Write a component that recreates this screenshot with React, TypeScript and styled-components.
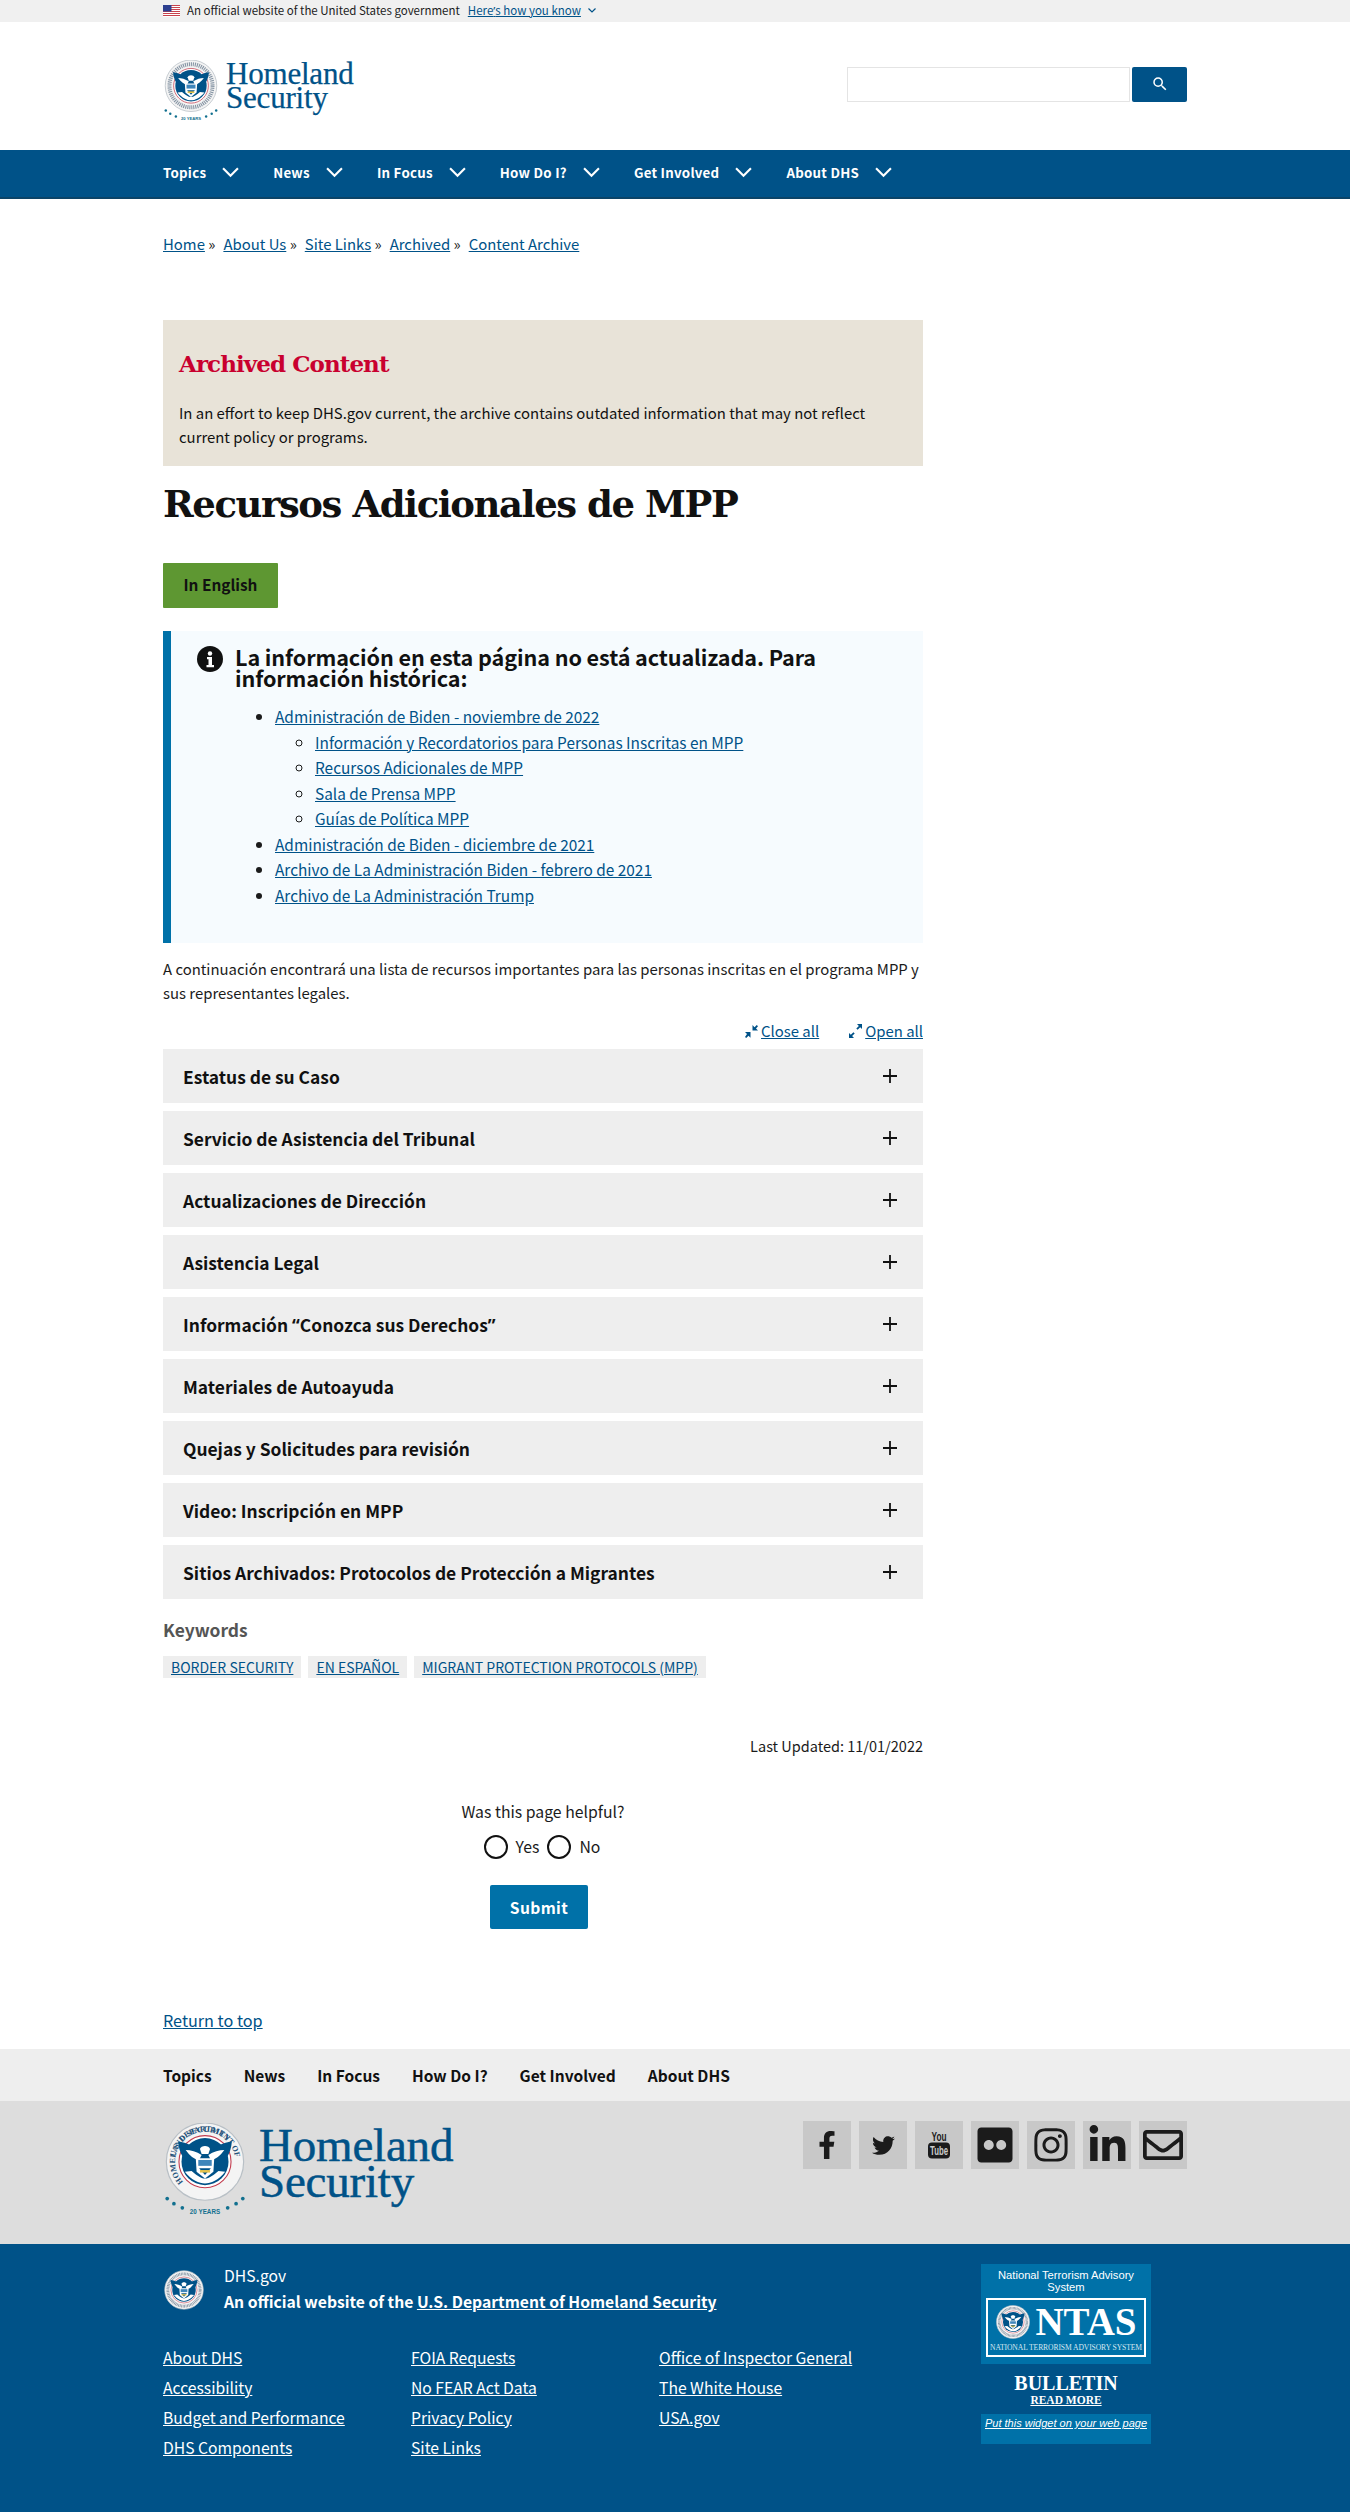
import React from "react";
import styled, { createGlobalStyle } from "styled-components";
import { FaFacebookF, FaTwitter, FaFlickr, FaInstagram, FaLinkedinIn, FaRegEnvelope } from "react-icons/fa";
import { MdSearch } from "react-icons/md";

const sans = `"Noto Sans CJK SC", "Noto Sans", sans-serif`;
const serif = `"DejaVu Serif", "Liberation Serif", serif`;

const Global = createGlobalStyle`
  html, body { margin: 0; padding: 0; background: #fff; }
  body { font-family: ${sans}; color: #1b1b1b; font-size: 14.5px; }
  a { color: #005288; }
`;

const Page = styled.div`width: 1350px; height: 2512px; overflow: hidden; display: flex; flex-direction: column;`;
const Wrap = styled.div`width: 1024px; margin-left: 163px;`;
const Punct = styled.span`font-family: "Noto Sans", sans-serif;`;

const Banner = styled.div`height: 22px; background: #f0f0f0; font-size: 11.5px; line-height: 21px;`;
const BannerIn = styled(Wrap)`display: flex; align-items: center; gap: 7px;`;
const BannerLink = styled.a`margin-left: 1px; text-decoration: underline;`;
const BannerChevron = styled.span`color: #005288; display: flex;`;

const Header = styled.header`height: 128px; display: flex; align-items: center;`;
const HeaderIn = styled(Wrap)`display: flex; justify-content: space-between; align-items: center;`;
const Logo = styled.div<{ $big?: boolean }>`display: flex; align-items: center; gap: ${(p) => (p.$big ? "12px" : "7px")}; margin-top: ${(p) => (p.$big ? "2px" : "10px")};`;
const LogoText = styled.div<{ $big?: boolean }>`
  font-family: "Liberation Serif", serif; color: #005288;
  font-size: ${(p) => (p.$big ? "47px" : "31px")};
  line-height: ${(p) => (p.$big ? "36px" : "24px")};
  letter-spacing: -.2px;
  -webkit-text-stroke: ${(p) => (p.$big ? ".5px" : ".25px")} #005288;
  margin-top: ${(p) => (p.$big ? "-14px" : "-10px")};
`;
const Search = styled.div`display: flex; gap: 2px; margin-bottom: 4px;`;
const SearchInput = styled.div`width: 281px; height: 33px; border: 1px solid #e4e4e4; background: #fff;`;
const SearchBtn = styled.div`width: 55px; height: 35px; background: #005288; border-radius: 2px; color: #fff; display: flex; align-items: center; justify-content: center;`;

const Nav = styled.nav`height: 47px; background: #005288; border-bottom: 2px solid #0b4468; display: flex; align-items: center;`;
const NavIn = styled(Wrap)`display: flex; gap: 34px; margin-top: -3px;`;
const NavItem = styled.div`display: flex; align-items: center; gap: 16px; color: #fff; font-weight: 700; font-size: 13.3px; letter-spacing: .25px;`;

const Breadcrumb = styled(Wrap)`margin-top: 33px; font-size: 14.9px; line-height: 24px; display: flex;`;
const Crumb = styled.span`margin-right: 8px; white-space: pre;`;

const Main = styled.main`width: 760px; margin-left: 163px;`;
const Archived = styled.section`margin-top: 64px; height: 146px; box-sizing: border-box; background: #e8e3d8; padding: 27px 16px 0;`;
const ArchivedTitle = styled.h2`margin: 0 0 20px; font: 700 23px/34px ${serif}; color: #c9002f; letter-spacing: -.93px;`;
const ArchivedText = styled.p`margin: 0; font-size: 14.9px; line-height: 24px; color: #111;`;
const Title = styled.h1`margin: 14px 0 0; font: 700 37px/48px ${serif}; color: #111; letter-spacing: -1.45px;`;
const English = styled.div`margin-top: 35px; width: 115px; height: 45px; border-radius: 1px; background: #5e9732; display: flex; align-items: center; justify-content: center; font-weight: 700; font-size: 15.4px; color: #111; padding-bottom: 3px; box-sizing: border-box;`;
const Alert = styled.section`margin-top: 23px; height: 312px; box-sizing: border-box; background: #f6fbfe; border-left: 8px solid #0071a8; padding: 15px 20px 0 26px; display: flex; gap: 12px;`;
const AlertIcon = styled.svg`flex: none;`;
const AlertBody = styled.div`flex: 1;`;
const AlertTitle = styled.h3`margin: 0 0 16px; font-size: 21.6px; line-height: 21px; font-weight: 700; color: #111; letter-spacing: -.1px;`;
const List = styled.ul`margin: 0; padding-left: 40px; font-size: 15.4px; line-height: 25.5px;`;
const Sub = styled.ul`margin: 0; padding-left: 40px; list-style: circle;`;
const Intro = styled.p`margin: 14px 0 0; font-size: 14.9px; line-height: 24px;`;
const Toggles = styled.div`margin-top: 14px; height: 30px; display: flex; justify-content: flex-end; gap: 30px; font-size: 14.9px; line-height: 24px;`;
const Toggle = styled.span`display: flex; align-items: center; gap: 3px; height: 24px;`;
const Accordion = styled.div`display: flex; flex-direction: column; gap: 8px;`;
const AccItem = styled.div`height: 54px; background: #eee; display: flex; align-items: center; justify-content: space-between; padding: 0 26px 0 20px; font-weight: 700; font-size: 17.4px; color: #111;`;
const Keywords = styled.h4`margin: 18px 0 0; font-size: 17.4px; line-height: 26px; font-weight: 700; color: #555;`;
const Tags = styled.div`display: flex; gap: 7px; margin-top: 13px;`;
const Tag = styled.a`background: #eee; font-size: 14px; line-height: 22px; padding: 0 8px; text-transform: uppercase;`;
const Updated = styled.p`margin: 56px 0 0; text-align: right; font-size: 14.5px; line-height: 24px;`;
const Helpful = styled.div`margin-top: 42px; display: flex; flex-direction: column; align-items: center;`;
const HelpQ = styled.div`font-size: 15.8px; line-height: 24px;`;
const Radios = styled.div`display: flex; align-items: center; margin-top: 11px; margin-right: 2px; font-size: 15.8px; line-height: 24px; gap: 8px;`;
const Radio = styled.span`width: 20px; height: 20px; border: 2px solid #111; border-radius: 50%; background: #fff;`;
const RadioLabel = styled.span`display: block;`;
const Submit = styled.div`margin-top: 26px; width: 98px; height: 44px; margin-right: 8px; background: #0071a8; border-radius: 2px; color: #fff; font-weight: 700; font-size: 15.6px; display: flex; align-items: center; justify-content: center; letter-spacing: .4px;`;
const Top = styled.a`display: block; margin-top: 79px; font-size: 16.2px; line-height: 24px;`;

const FootNav = styled.div`margin-top: 17px; height: 52px; background: #eee; display: flex; align-items: center;`;
const FootNavIn = styled(Wrap)`display: flex; gap: 32px; font-weight: 700; font-size: 15.5px; color: #111;`;
const FootMid = styled.div`height: 143px; background: #ddd;`;
const FootMidIn = styled(Wrap)`display: flex; justify-content: space-between; padding-top: 20px;`;
const Social = styled.div`display: flex; gap: 8px;`;
const SocialItem = styled.div`width: 48px; height: 48px; background: #c8c8c8; color: #1b1b1b; display: flex; align-items: center; justify-content: center;`;
const FootBlue = styled.footer`flex: 1; background: #005288; color: #fff;`;
const FootBlueIn = styled(Wrap)`display: flex; justify-content: space-between; padding-top: 20px;`;
const FootLeft = styled.div`width: 800px;`;
const Identity = styled.div`display: flex; gap: 19px; align-items: center; font-size: 15.7px; line-height: 26px;`;
const IdentityText = styled.div`margin-top: -1px;`;
const Strong = styled.div`font-weight: 700; a { color: #fff; }`;
const Links = styled.div`display: grid; grid-template-columns: repeat(3, 248px); margin-top: 28px; font-size: 15.7px; line-height: 30px;`;
const LinkCol = styled.div`display: flex; flex-direction: column; a { color: #fff; }`;
const Ntas = styled.div`width: 170px; margin-right: 36px; font-family: "Liberation Sans", sans-serif; text-align: center; display: flex; flex-direction: column;`;
const NtasTop = styled.div`background: #0071a8; height: 100px; box-sizing: border-box; padding: 5px 5px 0; font-size: 11.2px; line-height: 12px;`;
const NtasBox = styled.div`border: 2px solid #fff; height: 55px; margin-top: 5px; padding: 0 2px; display: flex; flex-direction: column;`;
const NtasRow = styled.div`display: flex; align-items: center; justify-content: center; gap: 4px; height: 43px;`;
const NtasWord = styled.div`font: 700 39px/40px "Liberation Serif", serif;`;
const NtasSub = styled.div`font: 7.6px/10px "Liberation Serif", serif; white-space: nowrap; letter-spacing: -.1px; color: #d5e6f0;`;
const Bulletin = styled.div`margin-top: 9px; font: 700 20px/20px "Liberation Serif", serif;`;
const ReadMore = styled.a`color: #fff; font: 700 11.5px/14px "Liberation Serif", serif;`;
const Widget = styled.div`margin: 7px 0 0; background: #0071a8; height: 30px; font-size: 11px; font-style: italic; line-height: 18px; a {color: #fff;}`;

function Seal({ size, years, ring }: { size: number; years?: boolean; ring?: boolean }) {
  const h = years ? 112 : 100;
  const id = `ring${size}`;
  const cy = years ? 46 : 50;
  return (
    <svg width={size} height={(size * h) / 100} viewBox={`0 0 100 ${h}`} aria-hidden>
      <circle cx="50" cy={cy} r="46" fill="#f4f4f4" stroke="#b9c0c6" strokeWidth="1.4" />
      <circle cx="50" cy={cy} r="31" fill="#fff" stroke="#c23a4d" strokeWidth="1.3" />
      {ring ? (
        <>
          <defs><path id={id} d={`M50 ${cy + 35.5} a35.5 35.5 0 1 1 .01 0`} /></defs>
          <text fontFamily="Liberation Serif, serif" fontWeight="700" fontSize="9.6" fill="#24527a" letterSpacing=".15">
            <textPath href={`#${id}`} startOffset="13%">HOMELAND SECURITY</textPath>
          </text>
          <defs><path id={`${id}t`} d={`M14 ${cy} a36 36 0 0 1 72 0`} /></defs>
          <text fontFamily="Liberation Serif, serif" fontWeight="700" fontSize="9.6" fill="#24527a">
            <textPath href={`#${id}t`} startOffset="5%">U.S. DEPARTMENT OF</textPath>
          </text>
        </>
      ) : (
        <circle cx="50" cy={cy} r="38.5" fill="none" stroke="#8796a5" strokeWidth="7" strokeDasharray="2 1.6" />
      )}
      <circle cx="50" cy={cy} r="28" fill="#005288" />
      <g transform={`translate(0 ${cy - 50})`}>
        <path d="M18 26 C28 27 38 32 46 40 L54 40 C62 32 72 27 82 26 C81 40 74 52 62 56 L38 56 C26 52 19 40 18 26Z" fill="#005288" />
        <path d="M27 36 C32 43 37 47 43 48 L46 42 C40 38 33 36 27 36Z M73 36 C68 43 63 47 57 48 L54 42 C60 38 67 36 73 36Z" fill="#fff" />
        <path d="M44 35 C45 30 55 30 56 35 L54 41 L46 41Z" fill="#fff" />
        <path d="M39 46 L61 46 L60 62 L50 70 L40 62Z" fill="#fff" />
        <rect x="42" y="48" width="16" height="7" fill="#3f86bb" />
        <path d="M43 58 L57 58 L50 66Z" fill="#005288" />
        <path d="M26 62 C34 72 43 76 50 76 C57 76 66 72 74 62 L66 61 C60 66 55 70 50 70 C45 70 40 66 34 61Z" fill="#fff" />
        <rect x="44" y="60" width="12" height="3" fill="#e5c34b" />
      </g>
      {years && (
        <g fill="#12708f">
          {[[5, 90], [13, 96], [23, 101], [77, 101], [87, 96], [95, 90]].map(([x, y]) => <circle key={x} cx={x} cy={y} r="2.2" />)}
          <text x="50" y="108" textAnchor="middle" fontFamily="Liberation Sans, sans-serif" fontWeight="700" fontSize="7.5">20 YEARS</text>
        </g>
      )}
    </svg>
  );
}

function Flag() {
  return (
    <svg width="17" height="12" viewBox="0 0 17 12" aria-hidden>
      <rect width="17" height="12" fill="#fff" />
      {[0, 2, 4, 6, 8, 10].map((y) => <rect key={y} y={y} width="17" height="1" fill="#c8424c" />)}
      <rect width="8.5" height="6.5" fill="#2c3f8f" />
    </svg>
  );
}

const Chevron = ({ w, h, sw }: { w: number; h: number; sw: number }) => (
  <svg width={w} height={h} viewBox="0 0 16 10" fill="none" stroke="currentColor" strokeWidth={sw} aria-hidden><path d="M1 1 L8 8 L15 1" /></svg>
);

const Plus = () => (
  <svg width="14" height="14" viewBox="0 0 14 14" stroke="#111" strokeWidth="1.8" aria-hidden><path d="M7 0V14M0 7H14" /></svg>
);

const Collapse = ({ open }: { open?: boolean }) => (
  <svg width="13" height="14" viewBox="0 0 13 14" fill="#005288" aria-hidden>
    {open
      ? <path d="M8 0h5v5l-1.8-1.8-2.6 2.6-1.3-1.3 2.6-2.6zM0 14V9l1.8 1.8 2.6-2.6 1.3 1.3-2.6 2.6L5 14z" />
      : <path d="M7.5 1v5.5H13l-2-2 2-2.2-1.2-1.2-2.3 2.2zM0 13l1.2 1 2.3-2.3 2 2V8H0l2 2z" />}
  </svg>
);

const YouTube = () => (
  <svg width="24" height="32" viewBox="0 0 24 32" aria-hidden>
    <text x="12" y="12" textAnchor="middle" fontFamily="Liberation Sans, sans-serif" fontWeight="700" fontSize="12" fill="#1b1b1b" textLength="15" lengthAdjust="spacingAndGlyphs">You</text>
    <rect x="1" y="13.5" width="22" height="16" rx="4" fill="#1b1b1b" />
    <text x="12" y="26" textAnchor="middle" fontFamily="Liberation Sans, sans-serif" fontWeight="700" fontSize="12" fill="#ccc" textLength="18" lengthAdjust="spacingAndGlyphs">Tube</text>
  </svg>
);

const crumbs = [["Home", "»"], ["About Us", "»"], ["Site Links", "»"], ["Archived", "»"], ["Content Archive", ""]];
const nav = ["Topics", "News", "In Focus", "How Do I?", "Get Involved", "About DHS"];
const acc: React.ReactNode[] = ["Estatus de su Caso", "Servicio de Asistencia del Tribunal", "Actualizaciones de Dirección", "Asistencia Legal", <>Información <Punct>“</Punct>Conozca sus Derechos<Punct>”</Punct></>, "Materiales de Autoayuda", "Quejas y Solicitudes para revisión", "Video: Inscripción en MPP", "Sitios Archivados: Protocolos de Protección a Migrantes"];
const cols = [["About DHS", "Accessibility", "Budget and Performance", "DHS Components"], ["FOIA Requests", "No FEAR Act Data", "Privacy Policy", "Site Links"], ["Office of Inspector General", "The White House", "USA.gov"]];

export default function App() {
  return (
    <Page>
      <Global />
      <Banner>
        <BannerIn>
          <Flag />
          <span>An official website of the United States government</span>
          <BannerLink href="#">Here<Punct>’</Punct>s how you know</BannerLink>
          <BannerChevron><Chevron w={8} h={5} sw={2.4} /></BannerChevron>
        </BannerIn>
      </Banner>
      <Header>
        <HeaderIn>
          <Logo><Seal size={56} years /><LogoText>Homeland<br />Security</LogoText></Logo>
          <Search><SearchInput /><SearchBtn><MdSearch size={18} /></SearchBtn></Search>
        </HeaderIn>
      </Header>
      <Nav>
        <NavIn>{nav.map((n) => <NavItem key={n}>{n}<Chevron w={17} h={11} sw={2} /></NavItem>)}</NavIn>
      </Nav>
      <Breadcrumb>{crumbs.map(([c, s]) => <Crumb key={c}><a href="#">{c}</a>{s && ` ${s}`}</Crumb>)}</Breadcrumb>
      <Main>
        <Archived>
          <ArchivedTitle>Archived Content</ArchivedTitle>
          <ArchivedText>In an effort to keep DHS.gov current, the archive contains outdated information that may not reflect current policy or programs.</ArchivedText>
        </Archived>
        <Title>Recursos Adicionales de MPP</Title>
        <English>In English</English>
        <Alert>
          <AlertIcon width="26" height="26" viewBox="0 0 26 26" aria-hidden>
            <circle cx="13" cy="13" r="13" fill="#111" />
            <circle cx="13" cy="7.5" r="2.2" fill="#fff" />
            <path d="M10 11h5v8h2v2.2H9.500V19h2v-5.800H10z" fill="#fff" />
          </AlertIcon>
          <AlertBody>
            <AlertTitle>La información en esta página no está actualizada. Para información histórica:</AlertTitle>
            <List>
              <li><a href="#">Administración de Biden - noviembre de 2022</a>
                <Sub>
                  <li><a href="#">Información y Recordatorios para Personas Inscritas en MPP</a></li>
                  <li><a href="#">Recursos Adicionales de MPP</a></li>
                  <li><a href="#">Sala de Prensa MPP</a></li>
                  <li><a href="#">Guías de Política MPP</a></li>
                </Sub>
              </li>
              <li><a href="#">Administración de Biden - diciembre de 2021</a></li>
              <li><a href="#">Archivo de La Administración Biden - febrero de 2021</a></li>
              <li><a href="#">Archivo de La Administración Trump</a></li>
            </List>
          </AlertBody>
        </Alert>
        <Intro>A continuación encontrará una lista de recursos importantes para las personas inscritas en el programa MPP y sus representantes legales.</Intro>
        <Toggles>
          <Toggle><Collapse /><a href="#">Close all</a></Toggle>
          <Toggle><Collapse open /><a href="#">Open all</a></Toggle>
        </Toggles>
        <Accordion>{acc.map((a, i) => <AccItem key={i}><span>{a}</span><Plus /></AccItem>)}</Accordion>
        <Keywords>Keywords</Keywords>
        <Tags>
          <Tag href="#">Border Security</Tag><Tag href="#">En Español</Tag><Tag href="#">Migrant Protection Protocols (MPP)</Tag>
        </Tags>
        <Updated>Last Updated: 11/01/2022</Updated>
        <Helpful>
          <HelpQ>Was this page helpful?</HelpQ>
          <Radios><Radio /><RadioLabel>Yes</RadioLabel><Radio /><RadioLabel>No</RadioLabel></Radios>
          <Submit>Submit</Submit>
        </Helpful>
        <Top href="#">Return to top</Top>
      </Main>
      <FootNav><FootNavIn>{nav.map((n) => <span key={n}>{n}</span>)}</FootNavIn></FootNav>
      <FootMid>
        <FootMidIn>
          <Logo $big><Seal size={84} years ring /><LogoText $big>Homeland<br />Security</LogoText></Logo>
          <Social>
            <SocialItem><FaFacebookF size={28} /></SocialItem>
            <SocialItem><FaTwitter size={23} /></SocialItem>
            <SocialItem><YouTube /></SocialItem>
            <SocialItem><FaFlickr size={40} /></SocialItem>
            <SocialItem><FaInstagram size={38} /></SocialItem>
            <SocialItem><FaLinkedinIn size={41} /></SocialItem>
            <SocialItem><FaRegEnvelope size={40} /></SocialItem>
          </Social>
        </FootMidIn>
      </FootMid>
      <FootBlue>
        <FootBlueIn>
          <FootLeft>
            <Identity>
              <Seal size={42} />
              <IdentityText>
                <div>DHS.gov</div>
                <Strong>An official website of the <a href="#">U.S. Department of Homeland Security</a></Strong>
              </IdentityText>
            </Identity>
            <Links>
              {cols.map((c, i) => <LinkCol key={i}>{c.map((l) => <a key={l} href="#">{l}</a>)}</LinkCol>)}
            </Links>
          </FootLeft>
          <Ntas>
            <NtasTop>
              National Terrorism Advisory System
              <NtasBox>
                <NtasRow><Seal size={36} /><NtasWord>NTAS</NtasWord></NtasRow>
                <NtasSub>NATIONAL TERRORISM ADVISORY SYSTEM</NtasSub>
              </NtasBox>
            </NtasTop>
            <Bulletin>BULLETIN</Bulletin>
            <ReadMore href="#">READ MORE</ReadMore>
            <Widget><a href="#">Put this widget on your web page</a></Widget>
          </Ntas>
        </FootBlueIn>
      </FootBlue>
    </Page>
  );
}
